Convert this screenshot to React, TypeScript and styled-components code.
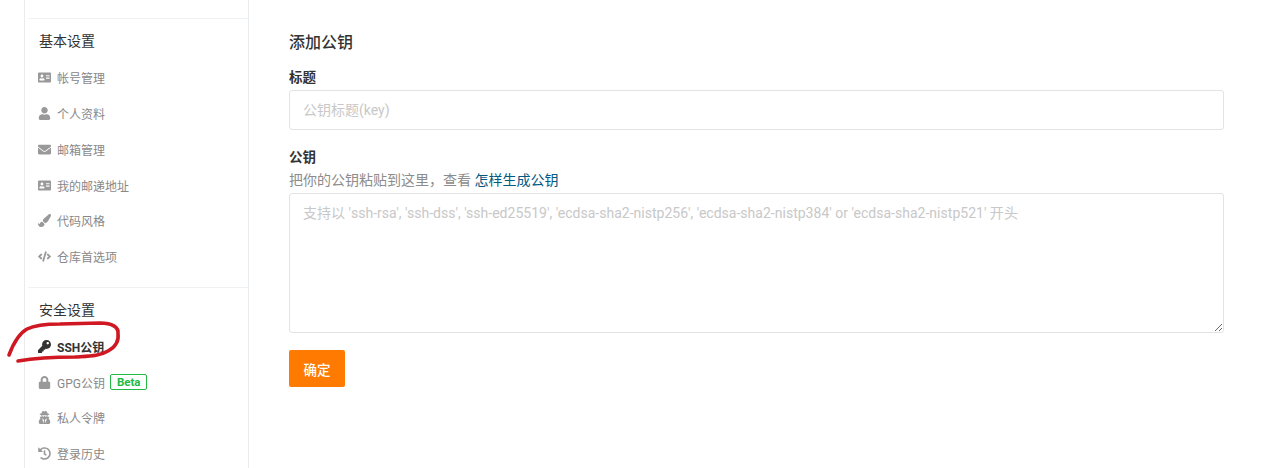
import { FC, ReactNode } from 'react';
import styled, { createGlobalStyle } from 'styled-components';
import {
  FaAddressCard,
  FaUser,
  FaEnvelope,
  FaPaintBrush,
  FaCode,
  FaKey,
  FaLock,
  FaUserSecret,
  FaHistory,
} from 'react-icons/fa';

const FONT = `Roboto, "Noto Sans CJK SC", sans-serif`;

const GlobalStyle = createGlobalStyle`
  html, body {
    margin: 0;
    height: 100%;
    overflow: hidden;
    background: #fff;
  }
  * {
    box-sizing: border-box;
  }
`;

const CSSPage = styled.div`
  position: relative;
  display: flex;
  height: 468px;
  overflow: hidden;
  font-family: ${FONT};
  color: #333;
`;

const CSSSidebar = styled.aside`
  width: 225px;
  height: 468px;
  margin-left: 24px;
  padding-top: 18px;
  border-left: 1px solid #e9ecee;
  border-right: 1px solid #e9ecee;
  flex-shrink: 0;
`;

const CSSGroup = styled.section`
  border-top: 1px solid #f0f1f2;
  margin-left: 3px;
  padding: 11px 0 12px 11px;
`;

const CSSGroupTitle = styled.h3`
  margin: 0 0 8px;
  height: 22px;
  line-height: 22px;
  font-size: 14px;
  font-weight: 400;
  color: #333;
`;

const CSSItem = styled.div<{ $active?: boolean }>`
  display: flex;
  align-items: center;
  height: 35.75px;
  font-size: 12px;
  font-weight: ${({ $active }) => ($active ? 700 : 400)};
  color: ${({ $active }) => ($active ? '#333' : '#888')};
`;

const CSSItemIcon = styled.span<{ $active?: boolean }>`
  display: flex;
  justify-content: center;
  align-items: center;
  width: 13px;
  margin: 0 6px 0 -1px;
  font-size: 13px;
  color: ${({ $active }) => ($active ? '#333' : '#999')};
`;

const CSSBadge = styled.span`
  display: inline-flex;
  align-items: center;
  height: 16px;
  margin-left: 5px;
  padding: 0 5px 0 6px;
  border: 1px solid #21ba45;
  border-radius: 2px;
  font-size: 11.5px;
  font-weight: 700;
  color: #21ba45;
`;

const CSSScribble = styled.svg`
  position: absolute;
  left: 0;
  top: 315px;
  width: 130px;
  height: 55px;
  pointer-events: none;
`;

const CSSMain = styled.main`
  width: 975px;
  padding: 32px 0 0 40px;
`;

const CSSTitle = styled.h2`
  margin: 0 0 14px;
  height: 22px;
  line-height: 22px;
  font-size: 16px;
  font-weight: 500;
  color: #333;
`;

const CSSField = styled.div<{ $gap: number }>`
  margin-bottom: ${({ $gap }) => $gap}px;
`;

const CSSLabel = styled.label`
  display: block;
  height: 18px;
  line-height: 18px;
  margin-bottom: 4px;
  font-size: 13.5px;
  font-weight: 700;
  color: #333;
`;

const CSSHint = styled.p`
  margin: 5px 0 4px;
  height: 18px;
  line-height: 18px;
  font-size: 14px;
  color: #8c8c8c;
  a {
    color: #005980;
    text-decoration: none;
  }
`;

const CSSInput = styled.input`
  display: block;
  width: 100%;
  height: 40px;
  padding: 0 13px;
  border: 1px solid #e3e3e3;
  border-radius: 3px;
  outline: none;
  font-family: ${FONT};
  font-size: 14px;
  &::placeholder {
    color: #c8c8c8;
  }
`;

const CSSTextarea = styled.textarea`
  display: block;
  width: 100%;
  height: 140px;
  padding: 10px 13px;
  border: 1px solid #e3e3e3;
  border-radius: 3px;
  outline: none;
  font-family: ${FONT};
  font-size: 14px;
  line-height: 18px;
  letter-spacing: 0.017px;
  &::placeholder {
    color: #c8c8c8;
  }
`;

const CSSSubmit = styled.button`
  display: block;
  width: 56px;
  height: 37px;
  padding: 0;
  border: none;
  border-radius: 2px;
  background: #ff7a00;
  font-family: ${FONT};
  font-size: 13.5px;
  font-weight: 500;
  color: #fff;
`;

type NavItem = {
  icon: ReactNode;
  label: string;
  active?: boolean;
  badge?: string;
};

const basicItems: NavItem[] = [
  { icon: <FaAddressCard />, label: '帐号管理' },
  { icon: <FaUser />, label: '个人资料' },
  { icon: <FaEnvelope />, label: '邮箱管理' },
  { icon: <FaAddressCard />, label: '我的邮递地址' },
  { icon: <FaPaintBrush />, label: '代码风格' },
  { icon: <FaCode />, label: '仓库首选项' },
];

const securityItems: NavItem[] = [
  { icon: <FaKey />, label: 'SSH公钥', active: true },
  { icon: <FaLock />, label: 'GPG公钥', badge: 'Beta' },
  { icon: <FaUserSecret />, label: '私人令牌' },
  { icon: <FaHistory />, label: '登录历史' },
];

const NavGroup: FC<{ title: string; items: NavItem[] }> = ({ title, items }) => (
  <CSSGroup>
    <CSSGroupTitle>{title}</CSSGroupTitle>
    {items.map((item) => (
      <CSSItem key={item.label} $active={item.active}>
        <CSSItemIcon $active={item.active}>{item.icon}</CSSItemIcon>
        {item.label}
        {item.badge && <CSSBadge>{item.badge}</CSSBadge>}
      </CSSItem>
    ))}
  </CSSGroup>
);

const App: FC = () => {
  return (
    <CSSPage>
      <GlobalStyle />
      <CSSSidebar>
        <NavGroup title="基本设置" items={basicItems} />
        <NavGroup title="安全设置" items={securityItems} />
      </CSSSidebar>
      <CSSMain>
        <CSSTitle>添加公钥</CSSTitle>
        <CSSField $gap={18}>
          <CSSLabel>标题</CSSLabel>
          <CSSInput placeholder="公钥标题(key)" />
        </CSSField>
        <CSSField $gap={17}>
          <CSSLabel>公钥</CSSLabel>
          <CSSHint>
            把你的公钥粘贴到这里，查看 <a href="#">怎样生成公钥</a>
          </CSSHint>
          <CSSTextarea placeholder="支持以 'ssh-rsa', 'ssh-dss', 'ssh-ed25519', 'ecdsa-sha2-nistp256', 'ecdsa-sha2-nistp384' or 'ecdsa-sha2-nistp521' 开头" />
        </CSSField>
        <CSSSubmit>确定</CSSSubmit>
      </CSSMain>
      <CSSScribble viewBox="0 315 130 55">
        <path
          d="M9 355 C12 347 18 334 27 329 C35 325 45 324 60 324 L100 323 C112 323 119 327 118 334 C119 340 116 347 108 351 C100 356 90 356 75 357 C55 357 35 358 18 361"
          fill="none"
          stroke="#cf1822"
          strokeWidth="3.6"
          strokeLinecap="round"
        />
      </CSSScribble>
    </CSSPage>
  );
};

export default App;
